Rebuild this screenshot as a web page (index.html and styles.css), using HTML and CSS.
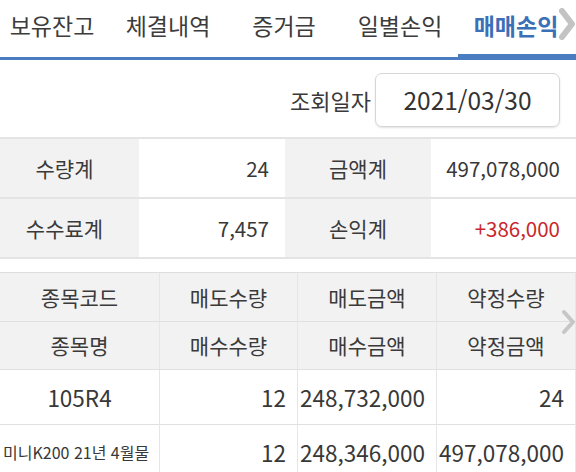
FILE: index.html
```html
<!DOCTYPE html>
<html lang="ko">
<head>
<meta charset="utf-8">
<link rel="stylesheet" href="styles.css">
</head>
<body>
<div class="app">
  <nav class="tabs">
    <div class="tab first">보유잔고</div>
    <div class="tab">체결내역</div>
    <div class="tab">증거금</div>
    <div class="tab">일별손익</div>
    <div class="tab active">매매손익</div>
    <svg class="hint tab-hint" viewBox="0 0 20 36" width="20" height="36"><polyline points="6,5 16,18 6,31" fill="none" stroke="#bdbdbd" stroke-width="6" stroke-linecap="round" stroke-linejoin="round"/></svg>
  </nav>

  <div class="query">
    <span class="query-label">조회일자</span>
    <div class="date-box">2021/03/30</div>
  </div>

  <div class="summary">
    <div class="s-label">수량계</div>
    <div class="s-value">24</div>
    <div class="s-label">금액계</div>
    <div class="s-value">497,078,000</div>
    <div class="s-label">수수료계</div>
    <div class="s-value">7,457</div>
    <div class="s-label">손익계</div>
    <div class="s-value profit">+386,000</div>
  </div>

  <div class="grid-wrap">
    <div class="grid">
      <div class="h">종목코드</div>
      <div class="h">매도수량</div>
      <div class="h">매도금액</div>
      <div class="h">약정수량</div>
      <div class="h">종목명</div>
      <div class="h">매수수량</div>
      <div class="h">매수금액</div>
      <div class="h">약정금액</div>

      <div class="d center">105R4</div>
      <div class="d">12</div>
      <div class="d">248,732,000</div>
      <div class="d">24</div>
      <div class="d name">미니K200 21년 4월물</div>
      <div class="d">12</div>
      <div class="d">248,346,000</div>
      <div class="d">497,078,000</div>
    </div>
    <svg class="hint grid-hint" viewBox="0 0 16 26" width="16" height="26"><polyline points="4,3 13,13 4,23" fill="none" stroke="#c6c6c6" stroke-width="4" stroke-linecap="round" stroke-linejoin="round"/></svg>
  </div>
</div>
</body>
</html>
```
FILE: styles.css
```css
* { box-sizing: border-box; }
html, body {
  margin: 0;
  padding: 0;
  background: #fff;
}
body {
  width: 576px;
  height: 472px;
  overflow: hidden;
  font-family: "Noto Sans CJK KR", "Noto Sans", sans-serif;
  color: #383838;
}
.app { width: 576px; }

/* tabs */
.tabs {
  position: relative;
  display: flex;
  height: 60px;
  border-bottom: 3px solid #4a7cc2;
  overflow: visible;
}
.tab {
  flex: none;
  width: 116px;
  display: flex;
  align-items: center;
  justify-content: center;
  padding-bottom: 6px;
  font-size: 23px;
  line-height: 1;
  color: #3c3c3c;
  white-space: nowrap;
}
.tab.first { margin-left: -6px; }
.tab.active {
  color: #3b6fb8;
  font-weight: 700;
  border-bottom: 6px solid #4a7cc2;
  margin-bottom: -3px;
  padding-bottom: 3px;
  width: 126px;
  padding-right: 10px;
}
.hint { position: absolute; }
.tab-hint { left: 556px; top: 6px; opacity: 0.9; }

/* query */
.query {
  display: flex;
  justify-content: flex-end;
  align-items: center;
  gap: 4px;
  height: 77px;
  padding: 2px 16px 0 0;
}
.query-label {
  font-size: 22px;
  line-height: 1;
  color: #3a3a3a;
}
.date-box {
  width: 185px;
  height: 54px;
  border: 1px solid #d6d6d6;
  border-radius: 7px;
  box-shadow: 0 1px 2px rgba(0,0,0,0.12);
  display: flex;
  align-items: center;
  justify-content: center;
  font-size: 24.5px;
  color: #333;
}

/* summary */
.summary {
  display: grid;
  grid-template-columns: 139px 146px 146px 1fr;
  border-top: 2px solid #e4e4e4;
}
.s-label, .s-value {
  height: 60px;
  border-bottom: 2px solid #e4e4e4;
  display: flex;
  align-items: center;
  font-size: 21px;
  line-height: 1;
}
.s-label {
  background: #f2f2f2;
  justify-content: center;
  color: #3a3a3a;
}
.s-label:nth-child(4n+1) { padding-right: 10px; }
.s-value {
  justify-content: flex-end;
  padding-right: 16px;
  font-size: 20.5px;
  color: #383838;
}
.s-value.profit { color: #c8282c; }

/* grid */
.grid-wrap {
  position: relative;
  margin-top: 13px;
}
.grid {
  display: grid;
  grid-template-columns: 160px 138px 139px 139px;
  grid-template-rows: 49px 48px 55px 55px;
  border-top: 1px solid #dedede;
}
.h, .d {
  display: flex;
  align-items: center;
  border-bottom: 1px solid #e0e0e0;
  border-right: 1px solid #e6e6e6;
  font-size: 21px;
  line-height: 1;
  white-space: nowrap;
}
.h {
  background: #f2f2f2;
  justify-content: center;
  color: #3a3a3a;
}
.d {
  justify-content: flex-end;
  padding-right: 11px;
  font-size: 22.5px;
  color: #383838;
}
.d.center { justify-content: center; padding-right: 0; }
.d.name {
  justify-content: flex-start;
  padding: 0 0 0 3px;
  font-size: 16px;
}
.grid-hint { left: 560px; top: 37px; }
```
